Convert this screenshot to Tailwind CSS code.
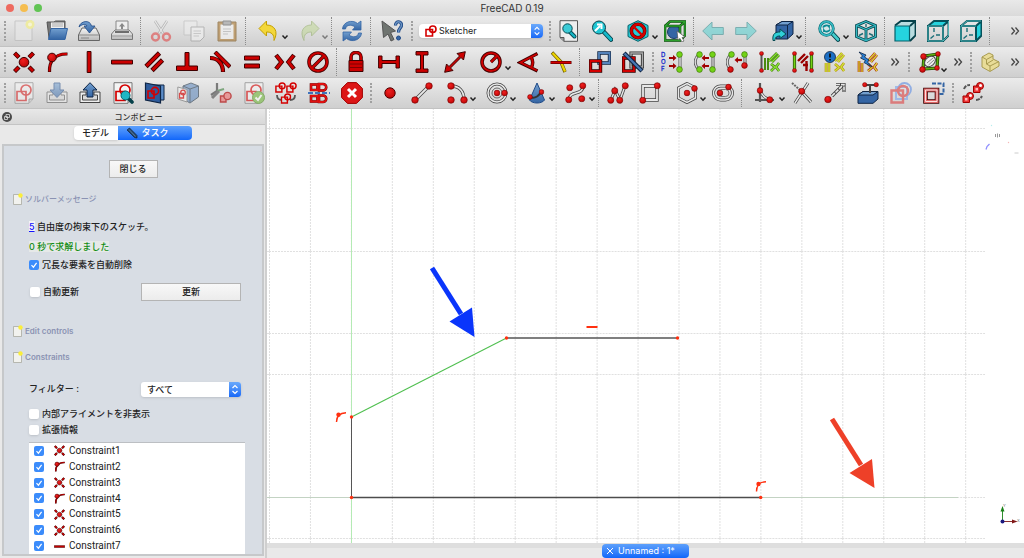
<!DOCTYPE html>
<html lang="ja">
<head>
<meta charset="utf-8">
<title>FreeCAD 0.19</title>
<script src="https://cdn.jsdelivr.net/npm/@tailwindcss/browser@4"></script>
</head>
<body class="flex h-screen flex-col overflow-hidden bg-[#ececec] font-[Inter,'Noto_Sans_CJK_JP',sans-serif] text-[9px] leading-4 text-[#222]">

<!-- shared shapes -->
<svg class="absolute h-0 w-0" aria-hidden="true">
  <defs>
    <linearGradient id="blue" x1="0" y1="0" x2="0" y2="1"><stop offset="0" stop-color="#729fcf"/><stop offset="1" stop-color="#3465a4"/></linearGradient>
    <linearGradient id="grey" x1="0" y1="0" x2="0" y2="1"><stop offset="0" stop-color="#f4f4f4"/><stop offset="1" stop-color="#b8b8b8"/></linearGradient>
    <radialGradient id="red" cx=".4" cy=".35" r=".8"><stop offset="0" stop-color="#f02020"/><stop offset="1" stop-color="#b40000"/></radialGradient>
    <pattern id="grid" x="269" y="128" width="40.95" height="41" patternUnits="userSpaceOnUse">
      <path d="M.5 0V41M0 .5H41" fill="none" stroke="#e0e0e0" stroke-dasharray="2 1"/>
    </pattern>
  </defs>
  <symbol id="chev" viewBox="0 0 8 6"><path d="M1.500 1.500 4 4.200 6.500 1.500" fill="none" stroke="currentColor" stroke-width="1.500"/></symbol>
  <symbol id="updown" viewBox="0 0 12 15"><path d="M3.500 6 6 3.500 8.500 6M3.500 9 6 11.500 8.500 9" fill="none" stroke="#fff" stroke-width="1.200"/></symbol>
  <symbol id="tick" viewBox="0 0 10 10"><path d="M2.500 5.200 4.400 7.200 7.600 2.800" fill="none" stroke="#fff" stroke-width="1.200"/></symbol>
  <symbol id="dot" viewBox="0 0 8 8"><circle cx="4" cy="4" r="3.300" fill="url(#red)" stroke="#700000" stroke-width=".6"/></symbol>
  <symbol id="gdot" viewBox="0 0 8 8"><circle cx="4" cy="4" r="3.300" fill="#73d216" stroke="#2d5c06" stroke-width=".6"/></symbol>
  <symbol id="coin" viewBox="0 0 22 22"><g stroke="#400000" stroke-width="4.400"><path d="M1.500 2 6 6.500M20.500 2 16 6.500M1.500 20.500 6 16M20.500 20.500 16 16"/></g><g stroke="#cc0000" stroke-width="2.800"><path d="M2 2.500 5.500 6M20 2.500 16.500 6M2 20 5.500 16.500M20 20 16.500 16.500"/></g><circle cx="11" cy="11.200" r="4.800" fill="url(#red)" stroke="#400000"/></symbol>
  <symbol id="pobj" viewBox="0 0 22 22"><path d="M3.500 21C3 11 8 2.500 21.500 3" fill="none" stroke="#400000" stroke-width="3.200"/><path d="M3.500 20.500C3 11 8 2.500 21 3" fill="none" stroke="#cc0000" stroke-width="1.800"/><circle cx="6" cy="6.500" r="4.300" fill="url(#red)" stroke="#400000"/></symbol>
  <symbol id="horiz" viewBox="0 0 22 22"><path d="M.5 9.200H21.500V13H.5Z" fill="#cc0000" stroke="#400000"/></symbol>
  <symbol id="page" viewBox="0 0 10 12"><path d="M.5 1.500H8.500V11.500H.5Z" fill="#f2f2ee" stroke="#a9a9a0" stroke-width=".8"/><circle cx="7.500" cy="2.500" r="2.200" fill="#fbee3a"/></symbol>
  <symbol id="skpage" viewBox="0 0 22 22"><path d="M2 .7H20V17L16 21.300H2Z" fill="#f4f4f4" stroke="#777"/><path d="M16 21V17H20" fill="#ccc" stroke="#777"/><circle cx="13" cy="8" r="5" fill="none" stroke="#d40000" stroke-width="1.700"/><path d="M4 9.500H13V18.500H4Z" fill="none" stroke="#d40000" stroke-width="1.700"/></symbol>
  <symbol id="mini" viewBox="0 0 12 12"><path d="M1 4.500H7.500V11H1Z" fill="none" stroke="#d40000" stroke-width="1.600"/><circle cx="7.800" cy="4.200" r="3.200" fill="none" stroke="#d40000" stroke-width="1.600"/></symbol>
  <symbol id="more" viewBox="0 0 10 10"><path d="M1.500 1.500 4.500 5 1.500 8.500M5.500 1.500 8.500 5 5.500 8.500" fill="none" stroke="#444" stroke-width="1.300"/></symbol>
  <symbol id="lens" viewBox="0 0 22 22"><path d="M12 11 20 19.500" stroke="#06414a" stroke-width="4.600" stroke-linecap="round"/><path d="M12 11 20 19.500" stroke="#16b8c8" stroke-width="2.800" stroke-linecap="round"/><circle cx="8" cy="7.500" r="6.500" fill="#1fc6d3" stroke="#06414a"/></symbol>
</svg>

<header class="grid h-4 shrink-0 grid-cols-[1fr_auto_1fr] items-center bg-linear-to-b from-[#e9e9e9] to-[#dadada] px-1.5">
  <div class="flex gap-1.5">
    <button aria-label="Close" class="size-2 rounded-full bg-[#ee6a5f]"></button>
    <button aria-label="Minimize" class="size-2 rounded-full bg-[#f5bd4f]"></button>
    <button aria-label="Zoom" class="size-2 rounded-full bg-[#61c454]"></button>
  </div>
  <h1 class="text-[10px] text-[#333]">FreeCAD 0.19</h1>
</header>

<div class="shrink-0 [&_button]:relative [&_button]:flex [&_button]:h-full [&_button]:w-8 [&_button]:grow [&_button]:items-center [&_button]:justify-center [&_button[aria-haspopup]]:w-10 [&_button>svg:first-child]:size-[22px] [&>nav]:flex [&>nav]:h-[31px] [&>nav]:items-center [&>nav]:border-b [&>nav]:border-[#c2c2c2] [&>nav]:bg-linear-to-b [&>nav]:from-[#ebebeb] [&>nav]:to-[#cfcfcf] [&>nav]:pl-0.5 [&>nav>div]:flex [&>nav>div]:h-full [&>nav>div]:shrink-0 [&>nav>hr]:mx-[2px] [&>nav>hr]:h-7 [&>nav>hr]:w-[2px] [&>nav>hr]:shrink-0 [&>nav>hr]:border-0 [&>nav>hr]:border-l [&>nav>hr]:border-dotted [&>nav>hr]:border-[#8a8a8a] [&>nav>i]:mx-[2px] [&>nav>i]:h-5 [&>nav>i]:w-[2px] [&>nav>i]:shrink-0 [&>nav>i]:border-l-2 [&>nav>i]:border-dotted [&>nav>i]:border-[#a0a0a0]">

<nav aria-label="File and view">
  <i></i><div class="w-[130px]">
    <button aria-label="New"><svg viewBox="0 0 22 22" class="opacity-70"><path d="M2 1H19V20.500H2Z" fill="#e6e6e6" stroke="#bbb"/><circle cx="17" cy="4.500" r="4.500" fill="#f3ef86"/><circle cx="17" cy="4.500" r="2" fill="#fffbd0"/></svg></button>
    <button aria-label="Open"><svg viewBox="0 0 22 22"><path d="M1 2H8L9.500 1H19V18H3Z" fill="#777" stroke="#555"/><path d="M5 2.500H18V8H5Z" fill="#eee"/><path d="M6 4H17M6 6H17" stroke="#aaa"/><path d="M5 8.500H21.500L19 19.500H2.500Z" fill="url(#blue)" stroke="#3465a4"/></svg></button>
    <button aria-label="Save"><svg viewBox="0 0 22 22"><path d="M4 8H18L21.500 15V20.500H.5V15Z" fill="url(#grey)" stroke="#666"/><path d="M1 15H21" stroke="#888"/><path d="M3 18H11" stroke="#888"/><path d="M1 7C2 1 12-1 13.500 6H17L11.500 13 6 6H9C8 3.500 4 4 1 7Z" fill="url(#blue)" stroke="#204a87" stroke-width=".8"/></svg></button>
    <button aria-label="Print"><svg viewBox="0 0 22 22"><path d="M5 1H17V11H5Z" fill="#eee" stroke="#888"/><path d="M11 3 14 6.500H12V9H10V6.500H8Z" fill="#888"/><path d="M4 10H18L21.500 14V19.500H.5V14Z" fill="url(#grey)" stroke="#777"/><path d="M4 12H18" stroke="#444" stroke-width="1.500"/><path d="M1 16H21" stroke="#999"/></svg></button>
  </div><hr><div class="w-[99px]">
    <button aria-label="Cut"><svg viewBox="0 0 22 22" class="opacity-60"><path d="M5 1 13.500 14M17 1 8.500 14" stroke="#999" stroke-width="2.600"/><path d="M5 1 13.500 14M17 1 8.500 14" stroke="#eee" stroke-width="1.200"/><circle cx="5.500" cy="17" r="3.500" fill="none" stroke="#e04848" stroke-width="2.400"/><circle cx="16.500" cy="17" r="3.500" fill="none" stroke="#e04848" stroke-width="2.400"/></svg></button>
    <button aria-label="Copy"><svg viewBox="0 0 22 22" class="opacity-60"><path d="M1 1H14V15H1Z" fill="#ececec" stroke="#bbb"/><path d="M8 7H21V17L17 21H8Z" fill="#f2f2f2" stroke="#999"/><path d="M10.500 11H18M10.500 13.500H18M10.500 16H16" stroke="#bbb"/></svg></button>
    <button aria-label="Paste"><svg viewBox="0 0 22 22" class="opacity-75"><path d="M2 2H20V21H2Z" fill="#b58b50" stroke="#8a6a3a"/><path d="M4.500 4.500H17.500V19H4.500Z" fill="#f0f0f0"/><path d="M7 1H15V5H7Z" fill="#aaa" stroke="#777"/><path d="M7 9H15M7 11.500H15M7 14H12" stroke="#bbb"/></svg></button>
  </div><hr><div class="w-20">
    <button aria-label="Undo" aria-haspopup="true"><svg viewBox="0 0 22 22"><path d="M1 8.500 8.500 1V5C16 5 21 11 16 20.500 16.500 14 13 12 8.500 12V16Z" fill="#f3d73a" stroke="#c4a000"/></svg><svg class="absolute right-0 bottom-1.5 h-1.5 w-2"><use href="#chev"/></svg></button>
    <button aria-label="Redo" aria-haspopup="true"><svg viewBox="0 0 22 22" class="opacity-50"><path d="M21 8.500 13.500 1V5C6 5 1 11 6 20.500 5.500 14 9 12 13.500 12V16Z" fill="#bcd68e" stroke="#8aa85a"/></svg><svg class="absolute right-0 bottom-1.5 h-1.5 w-2 opacity-50"><use href="#chev"/></svg></button>
  </div><hr><div class="w-[33px]">
    <button aria-label="Refresh"><svg viewBox="0 0 22 22"><path d="M1.500 9C2 2 11-1 16.500 3.500L20 1V10H11.500L14 7C10 4 5 5 4.500 9Z" fill="url(#blue)" stroke="#3465a4" stroke-width=".8"/><path d="M20.500 13C20 20 11 23 5.500 18.500L2 21V12H10.500L8 15C12 18 17 17 17.500 13Z" fill="url(#blue)" stroke="#3465a4" stroke-width=".8"/></svg></button>
  </div><hr><div class="w-[35px]">
    <button aria-label="What's this?"><svg viewBox="0 0 22 22"><path d="M1 1 14.500 11 9.500 12.500 13 19.500 10 21 7 14 2.500 17.500Z" fill="#6f7470" stroke="#555"/><path d="M14.500 5.500C14.500 0 21 1 20.500 5.500 20 8.500 17.500 8 17.500 12.500" fill="none" stroke="#204a87" stroke-width="3.200"/><path d="M14.500 5.500C14.500 0 21 1 20.500 5.500 20 8.500 17.500 8 17.500 12.500" fill="none" stroke="#6b94c4" stroke-width="1.400"/><circle cx="17.500" cy="18" r="2" fill="#3465a4" stroke="#204a87"/></svg></button>
  </div><i></i>
  <label class="mr-1 ml-1 flex h-[14px] w-[124px] shrink-0 items-center rounded-sm bg-white pl-1.5 shadow-sm">
    <svg class="size-3 shrink-0"><use href="#mini"/></svg>
    <select aria-label="Workbench" class="h-[14px] min-w-0 flex-1 appearance-none bg-transparent pl-0.5 text-[9px] leading-[14px] text-[#222]"><option>Sketcher</option></select>
    <svg class="h-[14px] w-3 shrink-0 rounded-r-sm bg-linear-to-b from-[#6aa9fb] to-[#1768f7]"><use href="#updown"/></svg>
  </label>
  <i></i><div class="w-[138px]">
    <button aria-label="Fit all"><svg viewBox="0 0 22 22"><path d="M2 .7H19.500V21.300H6L2 17.500Z" fill="#eee" stroke="#555"/><path d="M2 17.500H6V21.300" fill="#999" stroke="#555"/><path d="M11 11 16.500 16.500" stroke="#064a52" stroke-width="4" stroke-linecap="round"/><path d="M11 11 16.500 16.500" stroke="#16b8c8" stroke-width="2.200" stroke-linecap="round"/><circle cx="9.500" cy="8.500" r="4.700" fill="#3ccbd6" stroke="#064a52"/></svg></button>
    <button aria-label="Fit selection"><svg viewBox="0 0 22 22"><use href="#lens"/><path d="M4 11 9 6M6 4.500H10.500V9" fill="none" stroke="#fff" stroke-width="2"/></svg></button>
    <button aria-label="Draw style" aria-haspopup="true"><svg viewBox="0 0 22 22"><path d="M11 .7 21 5.500V16.500L11 21.300 1 16.500V5.500Z" fill="#25cbd6" stroke="#06606a"/><circle cx="11" cy="11" r="6.700" fill="none" stroke="#500" stroke-width="3.600"/><circle cx="11" cy="11" r="6.700" fill="none" stroke="#d40000" stroke-width="2.400"/><path d="M6.500 6.500 15.500 15.500" stroke="#d40000" stroke-width="2.400"/></svg><svg class="absolute right-0 bottom-1.5 h-1.5 w-2"><use href="#chev"/></svg></button>
    <button aria-label="Bounding box"><svg viewBox="0 0 22 22"><circle cx="10" cy="12" r="6.500" fill="#3465a4" stroke="#1b3a66"/><path d="M1 6H16V20.500H1ZM1 6 6 1.500H21V15.500L16 20.500M16 6 21 1.500" fill="none" stroke="#063d06" stroke-width="2.600"/><path d="M1 6H16V20.500H1ZM1 6 6 1.500H21V15.500L16 20.500M16 6 21 1.500" fill="none" stroke="#2ca02c" stroke-width="1.500"/><path d="M13 11 21 17 18 17.500 20 21 18 22 16 18.500 14 20Z" fill="#fff" stroke="#555" stroke-width=".7"/></svg></button>
  </div><hr><div class="w-[106px]">
    <button aria-label="Back"><svg viewBox="0 0 22 22" class="opacity-60"><path d="M.7 11 10 2V7.500H21.300V14.500H10V20Z" fill="#5fd0d0" stroke="#3a8f92"/></svg></button>
    <button aria-label="Forward"><svg viewBox="0 0 22 22" class="opacity-60"><path d="M21.300 11 12 2V7.500H.7V14.500H12V20Z" fill="#5fd0d0" stroke="#3a8f92"/></svg></button>
    <button aria-label="Linked object" aria-haspopup="true"><svg viewBox="0 0 22 22"><path d="M4 5 10 1.500H21V14L15.500 19H4Z" fill="#3465a4" stroke="#0e2444"/><path d="M4 5 10 1.500H21L15.500 5Z" fill="#729fcf" stroke="#0e2444"/><path d="M15.500 5V19" stroke="#0e2444"/><path d="M1 20.500C0 13 4 12 8 12V9L14 14 8 18.500V16C5 16 3 17 3 20.500Z" fill="#2fd0d8" stroke="#064a52"/></svg><svg class="absolute right-0 bottom-1.5 h-1.5 w-2"><use href="#chev"/></svg></button>
  </div><hr><div class="w-[73px]">
    <button aria-label="Sync view" aria-haspopup="true"><svg viewBox="0 0 22 22"><path d="M13 12 20 19.500" stroke="#06414a" stroke-width="4.600" stroke-linecap="round"/><path d="M13 12 20 19.500" stroke="#4cc" stroke-width="2.600" stroke-linecap="round"/><circle cx="8.500" cy="8.500" r="6.800" fill="#d6e8ea" stroke="#06606a" stroke-width="2.800"/><circle cx="8.500" cy="8.500" r="6.800" fill="none" stroke="#35b9c2" stroke-width="1.800"/><path d="M5 7.500C6 5 10 5 11 6.500V5M12 9.500C11 12 7 12 6 10.500V12" fill="none" stroke="#0a8a94" stroke-width="1.800"/></svg><svg class="absolute right-0 bottom-1.5 h-1.5 w-2"><use href="#chev"/></svg></button>
    <button aria-label="Isometric"><svg viewBox="0 0 22 22" fill="none"><g stroke="#06414a" stroke-width="2.800"><path d="M11 1.500 20.500 5.500V16.500L11 20.700 1.500 16.500V5.500ZM1.500 5.500 11 9.500 20.500 5.500M11 9.500V20.500"/></g><g stroke="#35b9c2" stroke-width="1.300"><path d="M11 1.500 20.500 5.500V16.500L11 20.700 1.500 16.500V5.500ZM1.500 5.500 11 9.500 20.500 5.500M11 9.500V20.500"/></g><path d="M4 15.500 8 13.500M18 15.500 14 13.500M11 4V7" stroke="#1b6f78" stroke-width="1.400"/></svg></button>
  </div><hr><div class="w-[99px]">
    <button aria-label="Front"><svg viewBox="0 0 22 22"><path d="M1 5.500 7 1H21.500V15.500L16 21M16 6 21.500 1" fill="#b9dcdf" stroke="#06414a" stroke-width="1.800"/><path d="M1 6H15.500V21H1Z" fill="#25d3de" stroke="#06606a" stroke-width="1.200"/></svg></button>
    <button aria-label="Top"><svg viewBox="0 0 22 22" fill="none"><path d="M1 6 7 1H21.500L16 6Z" fill="#25d3de"/><path d="M1 6H16V21H1ZM1 6 7 1H21.500L16 6M21.500 1V15.500L16 21" stroke="#06515a" stroke-width="2"/><path d="M1 6H16V21H1ZM21.500 1V15.500L16 21" stroke="#6cc" stroke-width=".8"/><path d="M7 8V12M3.500 18.500 7 15.500M9 15H13" stroke="#1b6f78" stroke-width="1.400"/></svg></button>
    <button aria-label="Right"><svg viewBox="0 0 22 22" fill="none"><path d="M16 6 21.500 1V15.500L16 21Z" fill="#25d3de"/><path d="M1 6H16V21H1ZM1 6 7 1H21.500L16 6M21.500 1V15.500L16 21" stroke="#06515a" stroke-width="2"/><path d="M1 6H16M1 6V21H16M1 6 7 1H21" stroke="#6cc" stroke-width=".8"/><path d="M7 8V12M3.500 18.500 7 15.500M9 15H13" stroke="#1b6f78" stroke-width="1.400"/></svg></button>
  </div><hr><a href="#more1" aria-label="More" class="ml-auto pr-1"><svg class="size-2.5"><use href="#more"/></svg></a>
</nav>

<nav aria-label="Constraints">
  <i></i><div class="w-[326px]">
    <button aria-label="Coincident"><svg><use href="#coin"/></svg></button>
    <button aria-label="Point on object"><svg><use href="#pobj"/></svg></button>
    <button aria-label="Vertical"><svg viewBox="0 0 22 22"><path d="M9.200 .5H13V21.500H9.200Z" fill="#cc0000" stroke="#400000"/></svg></button>
    <button aria-label="Horizontal"><svg><use href="#horiz"/></svg></button>
    <button aria-label="Parallel"><svg viewBox="0 0 22 22"><path d="M2 15.500 15.500 2M8 19.500 18.500 9" stroke="#400000" stroke-width="4.600"/><path d="M2.500 15 15 2.500M8.500 19 18 9.500" stroke="#cc0000" stroke-width="3"/></svg></button>
    <button aria-label="Perpendicular"><svg viewBox="0 0 22 22"><path d="M9 1.500H13V15H21.500V19.500H.5V15H9Z" fill="#cc0000" stroke="#400000"/></svg></button>
    <button aria-label="Tangent"><svg viewBox="0 0 22 22" fill="none"><path d="M6 1 21 16M1 7C9 7 14 13 14 21" stroke="#400000" stroke-width="4.200"/><path d="M6.500 1.500 20.500 15.500M1.500 7C9 7 14 13 14 20.500" stroke="#cc0000" stroke-width="2.600"/></svg></button>
    <button aria-label="Equal"><svg viewBox="0 0 22 22"><path d="M3.500 5H18.500V9H3.500ZM3.500 13H18.500V17H3.500Z" fill="#cc0000" stroke="#400000"/></svg></button>
    <button aria-label="Symmetric"><svg viewBox="0 0 22 22" fill="none"><path d="M2 4 7.500 11 2 18M20 4 14.500 11 20 18" stroke="#400000" stroke-width="4.400"/><path d="M2.500 4.500 7.500 11 2.500 17.500M19.500 4.500 14.500 11 19.500 17.500" stroke="#cc0000" stroke-width="2.800"/></svg></button>
    <button aria-label="Block"><svg viewBox="0 0 22 22" fill="none"><circle cx="11" cy="11" r="9" stroke="#400000" stroke-width="3.600"/><path d="M5 17 17 5" stroke="#400000" stroke-width="3.600"/><circle cx="11" cy="11" r="9" stroke="#cc0000" stroke-width="2.200"/><path d="M4.500 17.500 17.500 4.500" stroke="#cc0000" stroke-width="2.200"/></svg></button>
  </div><hr><div class="w-[237px]">
    <button aria-label="Lock"><svg viewBox="0 0 22 22"><path d="M6 10V6C6 0 16 0 16 6V10" fill="none" stroke="#400000" stroke-width="3.600"/><path d="M6 10V6C6 0 16 0 16 6V10" fill="none" stroke="#cc0000" stroke-width="2"/><path d="M4 9.500H18V20.500H4Z" fill="#cc0000" stroke="#400000"/><path d="M5 13H17M5 16.500H17" stroke="#800000"/></svg></button>
    <button aria-label="Horizontal distance"><svg viewBox="0 0 22 22"><path d="M.6 5H4V9.500H18V5H21.400V17H18V12.500H4V17H.6Z" fill="#cc0000" stroke="#400000"/></svg></button>
    <button aria-label="Vertical distance"><svg viewBox="0 0 22 22"><path d="M5 .6V4H9.500V18H5V21.400H17V18H12.500V4H17V.6Z" fill="#cc0000" stroke="#400000"/></svg></button>
    <button aria-label="Distance"><svg viewBox="0 0 22 22"><path d="M21.300 .7 19.500 9 17 6.500 6.500 17 9 19.500 .7 21.300 2.500 13 5 15.500 15.500 5 13 2.500Z" fill="#cc0000" stroke="#400000"/></svg></button>
    <button aria-label="Radius" aria-haspopup="true"><svg viewBox="0 0 22 22" fill="none"><circle cx="11" cy="11" r="9" stroke="#400000" stroke-width="3.600"/><path d="M11 11 17 5" stroke="#400000" stroke-width="3.200"/><circle cx="11" cy="11" r="9" stroke="#cc0000" stroke-width="2"/><path d="M11 11 17 5" stroke="#cc0000" stroke-width="2"/></svg><svg class="absolute right-0 bottom-1.5 h-1.5 w-2"><use href="#chev"/></svg></button>
    <button aria-label="Angle"><svg viewBox="0 0 22 22" fill="none"><path d="M20.500 2.500 3 11.500 20.500 20M14 6C16.500 10 16.500 13 14 17" stroke="#400000" stroke-width="3.400"/><path d="M20 3 3.500 11.500 20 19.500M14 6C16.500 10 16.500 13 14 17" stroke="#cc0000" stroke-width="1.900"/></svg></button>
    <button aria-label="Refraction"><svg viewBox="0 0 22 22" fill="none"><path d="M2 1.500 11 11 15 21" stroke="#6b5900" stroke-width="3.400"/><path d="M2.500 2 11 11 15 20.500" stroke="#edd400" stroke-width="2.200"/><path d="M.5 11.500H21.500" stroke="#500" stroke-width="3"/><path d="M1 11.500H21" stroke="#d40000" stroke-width="1.800"/></svg></button>
  </div><hr><div class="w-[67px]">
    <button aria-label="Toggle driving"><svg viewBox="0 0 22 22" fill="none"><path d="M10 2H20.500V12H10Z" stroke="#0e2444" stroke-width="3.400"/><path d="M10 2H20.500V12H10Z" stroke="#5583bb" stroke-width="1.800"/><path d="M1.500 10H11.500V20H1.500Z" stroke="#300" stroke-width="3.400"/><path d="M1.500 10H11.500V20H1.500Z" stroke="#d40000" stroke-width="1.800"/></svg></button>
    <button aria-label="Toggle active"><svg viewBox="0 0 22 22" fill="none"><path d="M9 2H20.500V16H9Z" stroke="#333" stroke-width="3.200"/><path d="M9 2H20.500V16H9Z" stroke="#aaa" stroke-width="1.400"/><path d="M1.500 7H12V20H1.500Z" stroke="#300" stroke-width="3.400"/><path d="M1.500 7H12V20H1.500Z" stroke="#d40000" stroke-width="1.800"/><path d="M2 2 20 20" stroke="#0e2444" stroke-width="4.400"/><path d="M2.500 2.500 19.500 19.500" stroke="#4a78b5" stroke-width="2.200"/></svg></button>
  </div><i></i><div class="w-[228px]">
    <button aria-label="Select DOF elements"><svg viewBox="0 0 22 22"><g font-size="6" fill="#2233cc" stroke="#2233cc" stroke-width=".3"><text x="0" y="6">D</text><text x="0" y="13">O</text><text x="0" y="20">F</text></g><path d="M19 4V18" stroke="#555" stroke-width="3"/><path d="M19 4V18" stroke="#ddd" stroke-width="1.500"/><path d="M8 7H13M8 15H13" stroke="#a00000" stroke-width="2.200"/><path d="M12 4 15.500 7 12 10ZM12 12 15.500 15 12 18Z" fill="#a00000"/><use href="#gdot" x="15" y="0" width="7" height="7"/><use href="#gdot" x="15" y="15" width="7" height="7"/></svg></button>
    <button aria-label="Close shape"><svg viewBox="0 0 22 22"><path d="M5 4C0 7 0 15 5 18M19 4V18" fill="none" stroke="#555" stroke-width="3"/><path d="M5 4C0 7 0 15 5 18M19 4V18" fill="none" stroke="#ddd" stroke-width="1.300"/><path d="M10 7H15M10 15H15" stroke="#a00000" stroke-width="2.200"/><path d="M11 4 7.500 7 11 10ZM11 12 7.500 15 11 18Z" fill="#a00000"/><use href="#gdot" x="2" y="0" width="7" height="7"/><use href="#gdot" x="2" y="15" width="7" height="7"/><use href="#gdot" x="15" y="0" width="7" height="7"/><use href="#gdot" x="15" y="15" width="7" height="7"/></svg></button>
    <button aria-label="Connect edges"><svg viewBox="0 0 22 22"><path d="M5 4C0 7 0 15 5 18M19 4V14" fill="none" stroke="#555" stroke-width="3"/><path d="M5 4C0 7 0 15 5 18M19 4V14" fill="none" stroke="#ddd" stroke-width="1.300"/><path d="M11 9H16" stroke="#a00000" stroke-width="2.200"/><path d="M12 6 8.500 9 12 12Z" fill="#a00000"/><use href="#gdot" x="2" y="0" width="7" height="7"/><use href="#dot" x="1" y="15" width="7" height="7"/><use href="#gdot" x="15" y="0" width="7" height="7"/><use href="#dot" x="15" y="11" width="7" height="7"/></svg></button>
    <button aria-label="Select constraints"><svg viewBox="0 0 22 22" fill="none"><path d="M2.500 2V20" stroke="#555" stroke-width="2"/><path d="M6 7V19M9 7V19" stroke="#4a8a10" stroke-width="2"/><path d="M10 10 18 2M13 11 20 4M12 13 16 16 12 20M20 12 17 16 20 20" stroke="#3c7a0a" stroke-width="2.600"/><path d="M10 10 18 2M13 11 20 4M12 13 16 16 12 20M20 12 17 16 20 20" stroke="#8ae234" stroke-width="1.400"/><use href="#dot" x="0" y="0" width="5" height="5"/><use href="#dot" x="0" y="17" width="5" height="5"/></svg></button>
    <button aria-label="Select elements"><svg viewBox="0 0 22 22" fill="none"><path d="M2.500 3V19M19.500 3V19" stroke="#2d5c06" stroke-width="3.200"/><path d="M2.500 3V19M19.500 3V19" stroke="#73d216" stroke-width="1.600"/><path d="M6 10 13 3M9 12 16 5M11 14H16M14.500 10V20" stroke="#900" stroke-width="2.400"/><use href="#dot" x="0" y="0" width="5" height="5"/><use href="#dot" x="0" y="17" width="5" height="5"/><use href="#dot" x="17" y="0" width="5" height="5"/><use href="#dot" x="17" y="17" width="5" height="5"/></svg></button>
    <button aria-label="Redundant constraints"><svg viewBox="0 0 22 22" fill="none"><path d="M2 12V21M5 12V21M11 10 18 2M14 11 20 4M11 13 15 16.500 11 20M20 12 17 16 20 20" stroke="#c08a00" stroke-width="2.600"/><path d="M2 12V21M5 12V21M11 10 18 2M14 11 20 4M11 13 15 16.500 11 20M20 12 17 16 20 20" stroke="#c8e23a" stroke-width="1.400"/><circle cx="6" cy="6" r="5.500" fill="#1c6fc4" stroke="#0e2444" stroke-width=".8"/><path d="M6 2.500V6.500M6 8V9.500" stroke="#111" stroke-width="1.800"/></svg></button>
    <button aria-label="Conflicting constraints"><svg viewBox="0 0 22 22" fill="none"><path d="M2 10V21M5 12V21M11 10 18 2M14 11 20 4M11 13 15 16.500 11 20M20 12 17 16 20 20" stroke="#b02000" stroke-width="2.600"/><path d="M2 10V21M5 12V21M11 10 18 2M14 11 20 4M11 13 15 16.500 11 20M20 12 17 16 20 20" stroke="#d8d83a" stroke-width="1.300"/><path d="M2 1 9 4 7.500 6 12 9 10.500 11 15 16 7 11.500 8.500 9.500 3.500 7 5.500 5Z" fill="#2a7fd4" stroke="#0e2444" stroke-width=".8"/></svg></button>
  </div><a href="#more2" aria-label="More" class="flex w-[22px] shrink-0 justify-center"><svg class="size-2.5"><use href="#more"/></svg></a><i></i><div class="w-9">
    <button aria-label="B-spline" aria-haspopup="true"><svg viewBox="0 0 22 22" fill="none"><path d="M5 5 19 3 18 17 4 18Z" stroke="#1d4006" stroke-width="3.200"/><path d="M5 5 19 3 18 17 4 18Z" stroke="#5fb010" stroke-width="1.700"/><ellipse cx="11" cy="10.500" rx="6" ry="4.500" transform="rotate(-40 11 10.500)" fill="#eee" stroke="#444"/><path d="M8 12 14 7M9.500 14 15 9" stroke="#888"/><use href="#dot" x="1" y="2" width="7" height="7"/><use href="#dot" x="16" y="0" width="6" height="6"/><use href="#dot" x="15" y="14" width="6" height="6"/><use href="#dot" x="0" y="15" width="7" height="7"/></svg><svg class="absolute right-0 bottom-1 h-1.5 w-2"><use href="#chev"/></svg></button>
  </div><a href="#more3" aria-label="More" class="flex w-5 shrink-0 justify-center"><svg class="size-2.5"><use href="#more"/></svg></a><i></i><div class="w-8">
    <button aria-label="Part"><svg viewBox="0 0 22 22"><path d="M3 6 10 2 14 4V8L20 11V15L11 20.500 3 16Z" fill="#e8dc98" stroke="#a89b50"/><path d="M3 6 7.500 8.500 14 5M7.500 8.500V13L11 15V20M11 15 20 10.500M7.500 13 14 9" fill="none" stroke="#a89b50"/></svg></button>
  </div><a href="#more4" aria-label="More" class="ml-auto pr-1"><svg class="size-2.5"><use href="#more"/></svg></a>
</nav>

<nav aria-label="Sketch tools">
  <i></i><div class="w-[360px]">
    <button aria-label="New sketch"><svg class="opacity-50"><use href="#skpage"/></svg></button>
    <button aria-label="Edit sketch"><svg viewBox="0 0 22 22" class="opacity-55"><path d="M7 10H1V20.500H21V10H15V13H18.500V18H3.500V13H7Z" fill="#eee" stroke="#555"/><path d="M8 1H14V8H18L11 15.500 4 8H8Z" fill="url(#blue)" stroke="#204a87"/></svg></button>
    <button aria-label="Leave sketch"><svg viewBox="0 0 22 22"><path d="M7 10H1V20.500H21V10H15V13H18.500V18H3.500V13H7Z" fill="#eee" stroke="#444"/><path d="M8 15H14V8H18L11 .7 4 8H8Z" fill="url(#blue)" stroke="#0e2444"/></svg></button>
    <button aria-label="View sketch"><svg viewBox="0 0 22 22"><use href="#skpage"/><path d="M15 15 20 20" stroke="#06414a" stroke-width="3.600" stroke-linecap="round"/><circle cx="13.500" cy="13.500" r="4.500" fill="#1fb6c3" stroke="#06606a"/></svg></button>
    <button aria-label="View section"><svg viewBox="0 0 22 22"><path d="M5 3H20V18H5Z" fill="#5b8cc8" stroke="#0e2444"/><path d="M1.500 1 16.500 4V21L1.500 18Z" fill="#2f5c9c" stroke="#0e2444" stroke-width="1.200"/><path d="M4 9H10V16H4Z" fill="none" stroke="#d40000" stroke-width="1.600"/><circle cx="11" cy="9" r="3.600" fill="none" stroke="#d40000" stroke-width="1.600"/></svg></button>
    <button aria-label="Map sketch"><svg viewBox="0 0 22 22" class="opacity-65"><path d="M6 4 14 1 21.500 4V15L13 21 6 17Z" fill="#6e93c2" stroke="#345"/><path d="M6 4 13 7 21.500 4M13 7V20" fill="none" stroke="#345"/><path d="M.8 5 10 7.500V20L.8 17Z" fill="#f0f0f0" stroke="#777"/><circle cx="6" cy="10.500" r="2.300" fill="none" stroke="#d40000" stroke-width="1.300"/><path d="M2.500 11.500H6.500V16H2.500Z" fill="none" stroke="#d40000" stroke-width="1.300"/></svg></button>
    <button aria-label="Reorient"><svg viewBox="0 0 22 22" class="opacity-65"><path d="M7 1V9L1 13" fill="none" stroke="#444" stroke-width="2.200"/><path d="M7 9 14 7" stroke="#4a8a4a" stroke-width="2"/><path d="M2 16 9 9" stroke="#555" stroke-width="3"/><g fill="#e77" stroke="#b00000" stroke-width="1.400"><path d="M10.500 14H16V20H10.500Z"/><circle cx="17.500" cy="14" r="3.600"/></g></svg></button>
    <button aria-label="Validate"><svg viewBox="0 0 22 22" class="opacity-60"><use href="#skpage"/><circle cx="15.500" cy="15.500" r="6" fill="#73b93c" stroke="#4e8a20"/><path d="M12.500 15.500 15 18 18.500 13" fill="none" stroke="#fff" stroke-width="2"/></svg></button>
    <button aria-label="Merge"><svg viewBox="0 0 22 22" fill="none"><path d="M2 13C2 18 5 18 7 18M20 13C20 18 17 18 15 18" stroke="#555" stroke-width="1.800"/><use href="#mini" x="0" y="0" width="11" height="11"/><use href="#mini" x="11" y="0" width="11" height="11"/><use href="#mini" x="5.500" y="11" width="11" height="11"/></svg></button>
    <button aria-label="Mirror"><svg viewBox="0 0 22 22" fill="none"><path d="M0 11H22" stroke="#3f74bd" stroke-width="2" stroke-dasharray="5 2"/><g stroke="#600000" stroke-width="2.600"><path d="M3 2.500H9.500V8H3ZM3 14H9.500V19.500H3Z"/><path d="M11 2H15A3 3 0 0 1 15 8.500H11ZM11 13.500H15A3 3 0 0 1 15 20H11Z"/></g><g stroke="#e01010" stroke-width="1.800"><path d="M3 2.500H9.500V8H3ZM3 14H9.500V19.500H3Z"/><path d="M11 2H15A3 3 0 0 1 15 8.500H11ZM11 13.500H15A3 3 0 0 1 15 20H11Z"/></g></svg></button>
    <button aria-label="Stop operation"><svg viewBox="0 0 22 22"><path d="M6.500 .6H15.500L21.400 6.500V15.500L15.500 21.400H6.500L.6 15.500V6.500Z" fill="#dc1616" stroke="#a00000"/><path d="M7 7 15 15M15 7 7 15" stroke="#fff" stroke-width="3"/></svg></button>
  </div><i></i><div class="w-[222px]">
    <button aria-label="Point"><svg viewBox="0 0 22 22"><circle cx="11" cy="11" r="5.200" fill="url(#red)" stroke="#500000"/></svg></button>
    <button aria-label="Line"><svg viewBox="0 0 22 22"><path d="M4 18 18 4" stroke="#444" stroke-width="3.400"/><path d="M4 18 18 4" stroke="#e8e8e8" stroke-width="1.800"/><use href="#dot" x="0" y="14" width="8" height="8"/><use href="#dot" x="14" y="0" width="8" height="8"/></svg></button>
    <button aria-label="Arc" aria-haspopup="true"><svg viewBox="0 0 22 22" fill="none"><path d="M5 4C13 4 18 9 18 18" stroke="#444" stroke-width="3.400"/><path d="M5 4C13 4 18 9 18 18" stroke="#e8e8e8" stroke-width="1.800"/><use href="#dot" x="1" y="0" width="8" height="8"/><use href="#dot" x="1" y="14" width="8" height="8"/><use href="#dot" x="14" y="14" width="8" height="8"/></svg><svg class="absolute right-0 bottom-1.5 h-1.5 w-2"><use href="#chev"/></svg></button>
    <button aria-label="Circle" aria-haspopup="true"><svg viewBox="0 0 22 22" fill="none"><circle cx="11" cy="11" r="9" stroke="#444" stroke-width="3"/><circle cx="11" cy="11" r="9" stroke="#e8e8e8" stroke-width="1.500"/><circle cx="11" cy="11" r="5" stroke="#666"/><use href="#dot" x="7.500" y="7.500" width="7" height="7"/><use href="#dot" x="15" y="7.500" width="7" height="7"/></svg><svg class="absolute right-0 bottom-1.5 h-1.5 w-2"><use href="#chev"/></svg></button>
    <button aria-label="Conic" aria-haspopup="true"><svg viewBox="0 0 22 22" fill="none"><path d="M11 1 18.500 18C16 22 6 22 3.500 18Z" fill="url(#blue)" stroke="#204a87"/><path d="M4 15C9 17 14 14 15.500 8" stroke="#333" stroke-width="2"/><use href="#dot" x="1" y="12" width="6" height="6"/><use href="#dot" x="12.500" y="7" width="6" height="6"/></svg><svg class="absolute right-0 bottom-1.5 h-1.5 w-2"><use href="#chev"/></svg></button>
    <button aria-label="B-spline curve" aria-haspopup="true"><svg viewBox="0 0 22 22" fill="none"><path d="M4 18C4 8 18 14 18 4" stroke="#444" stroke-width="3.200"/><path d="M4 18C4 8 18 14 18 4" stroke="#e8e8e8" stroke-width="1.600"/><use href="#dot" x="1" y="2" width="7.500" height="7.500"/><use href="#dot" x="14" y="0" width="7.500" height="7.500"/><use href="#dot" x="0" y="14" width="7.500" height="7.500"/><use href="#dot" x="13" y="13" width="7.500" height="7.500"/></svg><svg class="absolute right-0 bottom-1.5 h-1.5 w-2"><use href="#chev"/></svg></button>
  </div><hr><div class="w-[137px]">
    <button aria-label="Polyline"><svg viewBox="0 0 22 22" fill="none"><path d="M4 18 8 8 13 18 18 4" stroke="#444" stroke-width="3"/><path d="M4 18 8 8 13 18 18 4" stroke="#e8e8e8" stroke-width="1.400"/><use href="#dot" x="0" y="14.500" width="7.500" height="7.500"/><use href="#dot" x="4" y="5" width="7.500" height="7.500"/><use href="#dot" x="9" y="14.500" width="7.500" height="7.500"/><use href="#dot" x="14.500" y="0" width="7.500" height="7.500"/></svg></button>
    <button aria-label="Rectangle"><svg viewBox="0 0 22 22" fill="none"><path d="M4 4H18V18H4Z" stroke="#444" stroke-width="3.400"/><path d="M4 4H18V18H4Z" stroke="#e8e8e8" stroke-width="1.800"/><use href="#dot" x="0" y="14.500" width="7.500" height="7.500"/><use href="#dot" x="14.500" y="0" width="7.500" height="7.500"/></svg></button>
    <button aria-label="Polygon" aria-haspopup="true"><svg viewBox="0 0 22 22" fill="none"><path d="M11 1.500 19.500 6V16L11 20.500 2.500 16V6Z" stroke="#444" stroke-width="3"/><path d="M11 1.500 19.500 6V16L11 20.500 2.500 16V6Z" stroke="#e8e8e8" stroke-width="1.500"/><use href="#dot" x="7.500" y="7.500" width="7" height="7"/><use href="#dot" x="15" y="3" width="7" height="7"/></svg><svg class="absolute right-0 bottom-1.5 h-1.5 w-2"><use href="#chev"/></svg></button>
    <button aria-label="Slot"><svg viewBox="0 0 22 22" fill="none"><rect x="1.500" y="4" width="19" height="14" rx="7" stroke="#444" stroke-width="3"/><rect x="1.500" y="4" width="19" height="14" rx="7" stroke="#e8e8e8" stroke-width="1.500"/><rect x="5" y="7.500" width="12" height="7" rx="3.500" stroke="#777"/><use href="#dot" x="4.500" y="7.500" width="7" height="7"/><use href="#dot" x="13" y="1.500" width="7" height="7"/></svg></button>
  </div><hr><div class="w-[205px]">
    <button aria-label="Fillet" aria-haspopup="true"><svg viewBox="0 0 22 22" fill="none"><path d="M6 1V20M1 18H20" stroke="#555" stroke-width="2.200"/><path d="M6 8C8 14 11 17 18 18" stroke="#444" stroke-width="3"/><path d="M6 8C8 14 11 17 18 18" stroke="#e8e8e8" stroke-width="1.500"/><use href="#dot" x="2.500" y="5" width="7" height="7"/><use href="#dot" x="12" y="14" width="7.500" height="7.500"/></svg><svg class="absolute right-0 bottom-1.5 h-1.5 w-2"><use href="#chev"/></svg></button>
    <button aria-label="Trim"><svg viewBox="0 0 22 22" fill="none"><path d="M17 1 4 21M10 9 20 20" stroke="#444" stroke-width="3"/><path d="M17 1 4 21M10 9 20 20" stroke="#e8e8e8" stroke-width="1.400"/><path d="M1 1 9 8" stroke="#666" stroke-width="2" stroke-dasharray="2 1"/><use href="#dot" x="7" y="5.500" width="7.500" height="7.500"/></svg></button>
    <button aria-label="Extend"><svg viewBox="0 0 22 22" fill="none"><path d="M8 14 19 3M12 2.500H20V10" stroke="#444" stroke-width="3.200"/><path d="M8 14 19 3M12 2.500H20V10" stroke="#e8e8e8" stroke-width="1.600" stroke-dasharray="4 1"/><use href="#dot" x="0" y="13.500" width="8" height="8"/></svg></button>
    <button aria-label="External geometry"><svg viewBox="0 0 22 22" fill="none"><path d="M1 13 6 9.500H21V17L16 21.300H1Z" fill="#3465a4" stroke="#0e2444"/><path d="M1 13 6 9.500H21L16 13Z" fill="#729fcf" stroke="#0e2444"/><path d="M7 3H19M13 3V11" stroke="#444" stroke-width="2"/><use href="#dot" x="5" y="0" width="5.500" height="5.500"/><use href="#dot" x="16.500" y="0" width="5.500" height="5.500"/></svg></button>
    <button aria-label="Carbon copy"><svg viewBox="0 0 22 22" fill="none" class="opacity-80"><path d="M6 5H17V17H6Z" stroke="#8fb1ea" stroke-width="2"/><circle cx="14.500" cy="7.500" r="6.500" stroke="#7da2e4" stroke-width="1.800"/><circle cx="13" cy="9" r="5" stroke="#d66" stroke-width="2.400"/><path d="M1.500 8.500H13V20.500H1.500Z" stroke="#d66" stroke-width="2.400"/></svg></button>
    <button aria-label="Toggle construction"><svg viewBox="0 0 22 22" fill="none"><path d="M9 1.500H20.500V12H15" stroke="#3465a4" stroke-width="2" stroke-dasharray="4 1.500"/><path d="M2.500 8H14V19.500H2.500Z" stroke="#400000" stroke-width="4.600"/><path d="M2.500 8H14V19.500H2.500Z" stroke="#d66" stroke-width="3"/><path d="M2.500 8H14V19.500H2.500Z" stroke="#fbe0e0" stroke-width="1"/></svg></button>
  </div><i></i><div class="w-[33px]">
    <button aria-label="Clone"><svg viewBox="0 0 22 22" fill="none"><path d="M2 7C3 4 5 3 8 3M14 18C17 18 19 16 20 14" stroke="#555" stroke-width="2" stroke-dasharray="4 1"/><g fill="#e33" stroke="#a00000"><circle cx="8" cy="14" r="3.500"/><path d="M1 14H7.500V20.500H1Z"/><circle cx="18" cy="4" r="3.500"/><path d="M11.500 4H18V10.500H11.500Z"/></g><path d="M3 16H5.500V18.500H3ZM13.500 6H16V8.500H13.500Z" fill="#fbb"/><circle cx="8.500" cy="13.500" r="1.500" fill="#fff"/><circle cx="18.500" cy="3.500" r="1.500" fill="#fff"/></svg></button>
  </div>
</nav>
</div>

<div class="flex min-h-0 flex-1">
  <aside class="flex w-[267px] shrink-0 flex-col border-r-2 border-[#cfcfcf] bg-[#e9e9e9]">
    <div class="flex h-4 shrink-0 items-center border-b border-[#c4c4c4] bg-linear-to-b from-[#e8e8e8] to-[#d8d8d8]">
      <button aria-label="Float panel" class="ml-0.5"><svg viewBox="0 0 10 10" class="size-2.5"><circle cx="5" cy="5" r="5" fill="#4a4a4a"/><path d="M4 2.500H7.500V5.500H4ZM2.500 4.500H5.500V7.500H2.500Z" fill="none" stroke="#ddd" stroke-width=".8"/></svg></button>
      <h2 class="flex-1 text-center text-[8px] font-medium text-[#333]">コンボビュー</h2>
    </div>
    <div class="flex shrink-0 justify-center pt-px" role="tablist">
      <button role="tab" class="h-3.5 w-11 rounded-l-sm bg-white leading-3.5 font-medium shadow-sm">モデル</button>
      <button role="tab" aria-selected="true" class="flex h-3.5 w-[74px] items-center gap-1 rounded-r-sm bg-linear-to-b from-[#5da0fb] to-[#0f66fa] pl-2 leading-3.5 font-medium text-white"><svg viewBox="0 0 12 12" class="size-3"><path d="M1 3 3.500 1 11 8.500 11 11 8.500 10.500Z" fill="#27486b" stroke="#10233a" stroke-width=".7"/><path d="M3 2.500 9.500 9.500" stroke="#6287ac" stroke-width=".8"/></svg>タスク</button>
    </div>
    <form class="mr-px ml-0.5 mt-1 mb-[2px] flex min-h-0 flex-1 flex-col overflow-hidden border-2 border-[#c6c8ca] bg-[#d8dde4] pl-[25px] pr-[17px] font-medium text-[#222]">
      <button type="button" class="mt-3.5 mr-2 h-[18px] w-[49px] shrink-0 self-center border border-[#b4b4b4] bg-linear-to-b from-[#f8f8f8] to-[#ececec] leading-4">閉じる</button>
      <h3 class="mt-[13px] -ml-4 flex h-4 shrink-0 items-center gap-0.5 text-[8px] text-[#8b93b3]"><svg class="h-3 w-2.5"><use href="#page"/></svg>ソルバーメッセージ</h3>
      <p class="mt-3 h-4 shrink-0"><a href="#dof" class="bg-[#f3f3f6] text-[#1414ff] underline">5</a> 自由度の拘束下のスケッチ。</p>
      <p class="mt-1 h-4 shrink-0 text-[#118c11]"><span class="bg-[#e6e9e8]">0 秒で求解しました</span></p>
      <label class="mt-0.5 flex h-4 shrink-0 items-center gap-[3px]"><span class="grid size-2.5 [&>*]:[grid-area:1/1]"><input type="checkbox" checked class="size-2.5 appearance-none rounded-[2px] bg-white checked:bg-[#3b8cfb]"><svg class="pointer-events-none size-2.5"><use href="#tick"/></svg></span>冗長な要素を自動削除</label>
      <div class="mt-2.5 flex h-[18px] shrink-0 items-center justify-between">
        <label class="flex items-center gap-[3px] pl-px"><input type="checkbox" class="size-2.5 appearance-none rounded-[2px] bg-white shadow-sm">自動更新</label>
        <button type="button" class="mr-1 h-[18px] w-[100px] border border-[#b4b4b4] bg-linear-to-b from-[#f8f8f8] to-[#ececec] leading-4">更新</button>
      </div>
      <h3 class="mt-[22px] -ml-4 flex h-4 shrink-0 items-center gap-0.5 text-[8px] font-semibold text-[#8b93b3]"><svg class="h-3 w-2.5"><use href="#page"/></svg>Edit controls</h3>
      <h3 class="mt-2.5 -ml-4 flex h-4 shrink-0 items-center gap-0.5 text-[8px] font-semibold text-[#8b93b3]"><svg class="h-3 w-2.5"><use href="#page"/></svg>Constraints</h3>
      <div class="mt-4 flex h-4 shrink-0 items-center justify-between">
        <label for="filter">フィルター :</label>
        <span class="mr-1 flex h-[15px] w-[100px] overflow-hidden rounded-[3px] bg-white shadow-sm">
          <select id="filter" class="h-[15px] flex-1 appearance-none bg-transparent pl-1.5 text-[9px] leading-[15px] font-medium"><option>すべて</option></select>
          <svg class="h-[15px] w-3 bg-linear-to-b from-[#6aa9fb] to-[#1768f7]"><use href="#updown"/></svg>
        </span>
      </div>
      <label class="mt-[9px] flex h-4 shrink-0 items-center gap-[3px]"><input type="checkbox" class="size-2.5 appearance-none rounded-[2px] bg-white shadow-sm">内部アライメントを非表示</label>
      <label class="flex h-4 shrink-0 items-center gap-[3px]"><input type="checkbox" class="size-2.5 appearance-none rounded-[2px] bg-white shadow-sm">拡張情報</label>
      <ul class="mt-1 grid min-h-0 flex-1 auto-rows-fr border-t border-[#bcbfc3] bg-white pl-[5px] font-[Roboto,sans-serif] text-[10px] font-normal text-[#222] [&_label]:flex [&_label]:h-full [&_label]:items-center [&_input]:size-2.5 [&_input]:appearance-none [&_input]:rounded-[2px] [&_input]:bg-[#3b8cfb] [&_span]:mr-2.5 [&_span]:grid [&_span>*]:[grid-area:1/1] [&_span>svg]:pointer-events-none [&_span>svg]:size-2.5 [&_label>svg]:mr-1 [&_label>svg]:size-[11px]">
        <li><label><span><input type="checkbox" checked><svg><use href="#tick"/></svg></span><svg><use href="#coin"/></svg>Constraint1</label></li>
        <li><label><span><input type="checkbox" checked><svg><use href="#tick"/></svg></span><svg><use href="#pobj"/></svg>Constraint2</label></li>
        <li><label><span><input type="checkbox" checked><svg><use href="#tick"/></svg></span><svg><use href="#coin"/></svg>Constraint3</label></li>
        <li><label><span><input type="checkbox" checked><svg><use href="#tick"/></svg></span><svg><use href="#pobj"/></svg>Constraint4</label></li>
        <li><label><span><input type="checkbox" checked><svg><use href="#tick"/></svg></span><svg><use href="#coin"/></svg>Constraint5</label></li>
        <li><label><span><input type="checkbox" checked><svg><use href="#tick"/></svg></span><svg><use href="#coin"/></svg>Constraint6</label></li>
        <li><label><span><input type="checkbox" checked><svg><use href="#tick"/></svg></span><svg><use href="#horiz"/></svg>Constraint7</label></li>
      </ul>
    </form>
  </aside>

  <main class="flex min-w-0 flex-1 flex-col bg-[#e9e9e9]">
    <svg viewBox="267 109 757 434" preserveAspectRatio="xMinYMin slice" class="min-h-0 w-full flex-1 bg-white" fill="none" role="img" aria-label="Sketch">
      <path d="M267 109H985V543H267Z" fill="url(#grid)"/>
      <path d="M351.500 109V543" stroke="#b4eab4"/>
      <path d="M267 497.500H958" stroke="#c3d3c3"/>
      <path d="M351.500 417V497" stroke="#555"/>
      <path d="M351 497.500H761" stroke="#4c4c4c" stroke-width="1.400"/>
      <path d="M507 338H678" stroke="#555" stroke-width="1.300"/>
      <path d="M351.500 417 506.500 338" stroke="#4fbf4f" stroke-width="1.100"/>
      <g fill="#ff3010"><circle cx="351.500" cy="417" r="1.700"/><circle cx="351.500" cy="497.500" r="1.700"/><circle cx="506.500" cy="338" r="1.700"/><circle cx="677.500" cy="338" r="1.700"/><circle cx="760.700" cy="497.500" r="1.700"/></g>
      <g stroke="#ff3010" stroke-width="1.400"><path d="M336.500 422C336.500 416 339 413 346 412.700M756.500 491.500C756.500 485 759 482 766 481.700"/></g>
      <circle cx="338.500" cy="414.700" r="2.200" fill="#ff3010"/><circle cx="758.500" cy="484" r="2.200" fill="#ff3010"/>
      <path d="M586.500 327H597.500" stroke="#ff3010" stroke-width="2"/>
      <path d="M432 268 461 314" stroke="#0a35fb" stroke-width="5"/><path d="M449.500 321.500 472 307.500 474.500 337Z" fill="#0a35fb"/>
      <path d="M832 419 861 465" stroke="#ee4028" stroke-width="5"/><path d="M849.500 473 872 459 874.500 488Z" fill="#ee4028"/>
      <path d="M1002.500 521V509" stroke="#2f8f2f"/><path d="M1000.500 511.500 1002.500 506 1004.500 511.500Z" fill="#188018"/>
      <path d="M1003 521.500H1014" stroke="#8a3030"/><path d="M1012 519.500 1017.500 521.500 1012 523.500Z" fill="#801818"/>
      <circle cx="1002.500" cy="521.500" r="2" fill="#1a1a80"/>
      <text x="1003" y="507" font-size="4" fill="#666">Y</text><text x="1017" y="522" font-size="4" fill="#666">X</text>
      <path d="M995.500 134V137M997.500 133.500V137.500M999.500 134V137" stroke="#999"/>
      <path d="M986 149.500 987 146.500 989.500 144" stroke="#9090ff" stroke-width="1.300"/>
      <path d="M1014.500 153H1018.500" stroke="#ccc"/><circle cx="1008.500" cy="142.500" r=".7" fill="#f4b8b8"/><circle cx="991.500" cy="125.500" r=".7" fill="#b8ecec"/>
    </svg>
    <div class="flex h-[15px] shrink-0 justify-center border-t-[5px] border-[#dedede]">
      <button class="relative -top-1 flex h-3.5 w-[87px] items-center gap-1 rounded-sm bg-linear-to-b from-[#5da0fb] to-[#0f66fa] px-1 text-[9px] text-white"><svg viewBox="0 0 8 8" class="size-2"><path d="M1 1 7 7M7 1 1 7" stroke="#fff"/></svg>Unnamed : 1*</button>
    </div>
  </main>
</div>
</body>
</html>
